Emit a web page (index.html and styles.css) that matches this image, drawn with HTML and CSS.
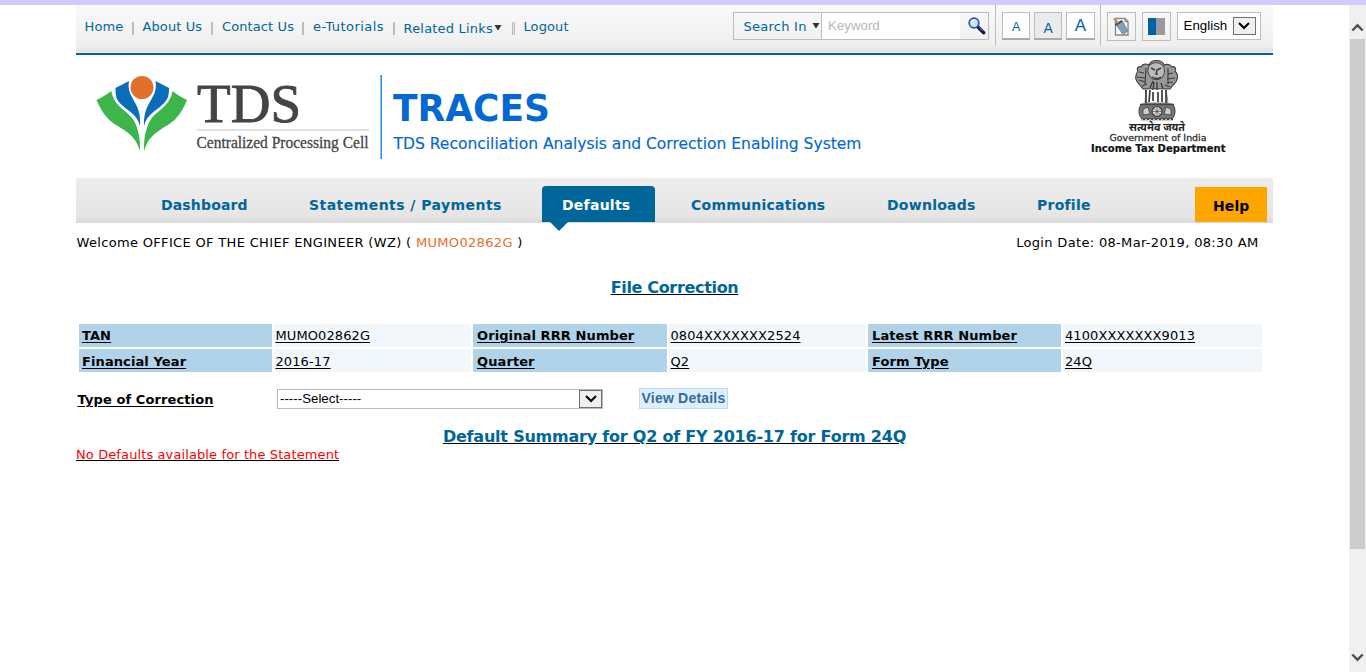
FILE: index.html
```
<!DOCTYPE html>
<html lang="en">
<head>
<meta charset="utf-8">
<title>TRACES - File Correction</title>
<link rel="stylesheet" href="styles.css">
</head>
<body>
<div class="strip"></div>
<div class="shell">
  <div class="page">
    <header class="topbar">
      <nav class="links">
        <a class="l-home">Home</a><i class="sep"></i>
        <a class="l-about">About Us</a><i class="sep"></i>
        <a class="l-contact">Contact Us</a><i class="sep"></i>
        <a class="l-tut">e-Tutorials</a><i class="sep"></i>
        <a class="l-related">Related Links<svg class="caret" width="8" height="6" viewBox="0 0 8 6"><path d="M.5 0h7L4.500 5h-1z" fill="#333"/></svg></a><i class="sep double"></i>
        <a class="l-logout">Logout</a>
      </nav>
      <div class="search">
        <span class="search-in">Search In<svg class="caret" width="8" height="6" viewBox="0 0 8 6"><path d="M.5 0h7L4.500 5h-1z" fill="#333"/></svg></span>
        <span class="keyword">Keyword</span>
        <span class="go"><svg width="18" height="18" viewBox="0 0 18 18"><path d="M9.500 9.500l6.200 6.200" stroke="#101b48" stroke-width="3.400" stroke-linecap="round"/><path d="M11 10.200l4 3.800" stroke="#6384c8" stroke-width="1"/><circle cx="6" cy="6" r="4.800" fill="#cfe4fb" stroke="#2852b8" stroke-width="1.700"/><path d="M3.500 6.200A2.700 2.700 0 0 1 6.400 3.300" fill="none" stroke="#fff" stroke-width="1.600"/></svg></span>
      </div>
      <div class="sizes">
        <span class="sz small">A</span><span class="sz mid">A</span><span class="sz big">A</span>
      </div>
      <div class="tools">
        <span class="tool"><svg width="18" height="20" viewBox="0 0 18 20"><path d="M3.500 1.500h9.500l3 3.200V18H3.500z" fill="#fff" stroke="#888" stroke-width="1.400"/><path d="M13 1.500v3.200h3" fill="none" stroke="#777"/><path d="M4 7.600l6.500-3.600 5.300 10-4.800 3.600z" fill="#7e9fbd" stroke="#6d7d8b" stroke-width=".8"/><path d="M3.300 7.800L10.200 3.900" stroke="#504a45" stroke-width="2"/><path d="M2 1.500L6 6" stroke="#c48c4e" stroke-width="2.200"/></svg></span>
        <span class="tool"><svg width="17" height="17" viewBox="0 0 17 17"><path d="M0 0h8.500v17H0z" fill="#0360a1"/><path d="M8.500 0H17v17H8.500z" fill="#999"/></svg></span>
        <span class="lang">English<span class="drop"><svg width="12" height="8" viewBox="0 0 12 8"><path d="M1 1l5 5 5-5" fill="none" stroke="#000" stroke-width="2"/></svg></span></span>
      </div>
    </header>

    <div class="brand">
      <svg class="tds" width="800" height="112" viewBox="0 0 800 112">
        <g fill="#3cb54a">
          <path d="M20.500 45C25 43 30 40 35.500 36C37 50 50 55 57 64C62 72 64.500 84 64 96C61 86 56 80 48 75C36 67 30 66 20.500 45z"/>
          <path d="M111 45C106.500 43 101.500 40 96.500 36C94.500 50 82 55 75 64C70 72 67.500 84 68 96C71 86 76 80 84 75C96 67 102 66 111 45z"/>
        </g>
        <g fill="#0a6db9">
          <path d="M39.500 33L53 26C50 44 66 46 64 71C61 59 53 57 46 50C40 45 39.500 41 39.500 33z"/>
          <path d="M93 33L79.500 26C82.500 44 67 46 68 71C71 59 79 57 86 50C92 45 93 41 93 33z"/>
        </g>
        <circle cx="66" cy="32.500" r="11.500" fill="#e0702b"/>
        <text class="serif name" x="121" y="67" font-size="54" textLength="104" lengthAdjust="spacingAndGlyphs">TDS</text>
        <path d="M121 75h172" stroke="#c4c4c4" stroke-width="1.200"/>
        <text class="serif cell" x="120.500" y="93" font-size="17.500" textLength="172" lengthAdjust="spacingAndGlyphs">Centralized Processing Cell</text>
        <path d="M305.200 20v84" stroke="#368ae0" stroke-width="1.600"/>
        <text class="blue" x="317" y="66" font-size="37" font-weight="bold" textLength="157" lengthAdjust="spacingAndGlyphs">TRACES</text>
        <text class="blue tag" x="317.500" y="93.500" font-size="15.300" textLength="468" lengthAdjust="spacingAndGlyphs">TDS Reconciliation Analysis and Correction Enabling System</text>
      </svg>
      <svg class="emblem" width="138" height="104" viewBox="1088 55 138 104">
        <g stroke="#3a3a3a" fill="#999">
          <path d="M1138 71c-2-3 1-5 3-4 2-4 6-3 8-2 2-6 13-6 15 0 3-1 6-1 8 2 2-1 5 1 3 4 4 4 3 10-2 14l-3 4h-27l-4-5c-4-4-4-9-1-13z" stroke-width="1.100"/>
          <path d="M1146 89l-1 14h23l-2-14z" fill="#fff" stroke-width=".6"/>
          <path d="M1146 90v13M1150 90l-1 12M1153 92v9M1158 92v10M1162 90v12M1166 90v13" stroke-width="1.700" fill="none"/>
          <path d="M1149 66c-2 4-1 8 1 10 2 5 10 5 13 0 2-3 2-7 0-10-4-5-11-4-14 0z" fill="#bbb"/>
          <path d="M1151 68l4 2m6-2l-4 2-1 4h2m-6 3q5 3 9 0M1153 81l-3 7m4-6l-1 8m4-8v8m4-7l2 6" fill="none" stroke-width="1.400"/>
          <path d="M1139 72l5 1m-7 4 8 1m-6 2 6 2m-3 4 5-2m26-11l-5 1m7 4-8 1m6 3-6 1m3 4-5-2M1146 68l-1 16m23-16v16" fill="none" stroke-width="1.100"/>
          <path d="M1142 104h30c4 3 4 11 0 15h-30c-4-4-4-12 0-15z" fill="#777"/>
          <circle cx="1157" cy="111.500" r="5" fill="#ddd" stroke-width="1.200"/>
          <path d="M1157 106.500v10M1152 111.500h10M1153.500 108l7 7m0-7l-7 7" stroke-width=".6"/>
          <path d="M1143 109l5-2 2 7-7 1zm28 0-5-2-2 7 7 1z" fill="#ccc" stroke-width=".8"/>
          <path d="M1140 104.500h34M1141 119.500h32" stroke="#444" stroke-width="1.500"/>
          <path d="M1141 119.500h31" stroke="#bbb" stroke-width="1" stroke-dasharray="2 2"/>
        </g>
        <text class="deva" x="1129" y="131" font-size="10.500" textLength="56" lengthAdjust="spacingAndGlyphs">सत्यमेव जयते</text>
        <text class="gov" x="1109.500" y="141" font-size="9" textLength="97" lengthAdjust="spacingAndGlyphs">Government of India</text>
        <text class="itd" x="1091" y="152" font-size="9.800" textLength="134.500" lengthAdjust="spacingAndGlyphs">Income Tax Department</text>
      </svg>
    </div>

    <nav class="tabs">
      <a class="t-dash">Dashboard</a>
      <a class="t-stmt">Statements / Payments</a>
      <a class="t-def">Defaults</a>
      <a class="t-comm">Communications</a>
      <a class="t-down">Downloads</a>
      <a class="t-prof">Profile</a>
      <a class="t-help">Help</a>
    </nav>

    <div class="welcome">
      <span class="w-user">Welcome OFFICE OF THE CHIEF ENGINEER (WZ) ( <b>MUMO02862G</b> )</span>
      <span class="w-date">Login Date: 08-Mar-2019, 08:30 AM</span>
    </div>

    <h1 class="title"><span>File Correction</span></h1>

    <div class="grid">
      <div class="k first"><u>TAN</u></div><div class="v"><u>MUMO02862G</u></div>
      <div class="k"><u>Original RRR Number</u></div><div class="v"><u>0804XXXXXXX2524</u></div>
      <div class="k"><u>Latest RRR Number</u></div><div class="v last"><u>4100XXXXXXX9013</u></div>
      <div class="k first low"><u>Financial Year</u></div><div class="v low"><u>2016-17</u></div>
      <div class="k low"><u>Quarter</u></div><div class="v low"><u>Q2</u></div>
      <div class="k low"><u>Form Type</u></div><div class="v last low"><u>24Q</u></div>
    </div>

    <div class="form">
      <span class="f-label"><u>Type of Correction</u></span>
      <span class="select">-----Select-----<span class="drop"><svg width="12" height="8" viewBox="0 0 12 8"><path d="M1 1l5 5 5-5" fill="none" stroke="#000" stroke-width="2"/></svg></span></span>
      <span class="btn">View Details</span>
    </div>

    <h2 class="summary"><span>Default Summary for Q2 of FY 2016-17 for Form 24Q</span></h2>
    <p class="none"><span>No Defaults available for the Statement</span></p>
  </div>

  <div class="scroll">
    <svg width="13" height="9" viewBox="0 0 13 9"><path d="M1.300 7.500l5.200-5.200 5.200 5.200" fill="none" stroke="#505050" stroke-width="2.400"/></svg>
    <div class="thumb"></div>
    <svg width="13" height="9" viewBox="0 0 13 9"><path d="M1.300 1.500l5.200 5.200 5.200-5.200" fill="none" stroke="#505050" stroke-width="2.400"/></svg>
  </div>
</div>
</body>
</html>
```
FILE: styles.css
```
* { box-sizing: border-box; }
body { margin: 0; height: 672px; overflow: hidden; background: #fff; color: #000; font: 13px/16px Verdana, "DejaVu Sans", sans-serif; }
.strip { height: 5px; background: #d5c8ff; }
.shell { display: flex; justify-content: space-between; height: 667px; padding-left: 76px; }
.page { width: 1197px; }

.topbar { display: flex; height: 50px; border-bottom: 2px solid #0464a0; background: linear-gradient(#fafafa, #efefef 85%, #e2e2e2 96%, #f4f4f4); color: #069; }
.links { display: flex; width: 657px; padding: 14px 0 0 8.500px; white-space: nowrap; }
.links a { display: block; flex: none; height: 16px; letter-spacing: .1px; }
.sep { flex: none; width: 2px; height: 13px; margin: 3px 9px 0 0; background: #bdbdbd; }
.sep.double { width: 3px; border: solid #bdbdbd; border-width: 0 1px; background: #e4e4e4; }
.l-home { width: 47px; }
.l-about { width: 68.500px; }
.l-contact { width: 80px; }
.links .l-tut { width: 79.500px; letter-spacing: .45px; }
.links .l-related { width: 108px; padding-top: 2px; letter-spacing: .2px; }
.caret { margin-left: 1px; vertical-align: 2px; }

.search { display: flex; width: 256px; height: 28px; margin-top: 7px; border: 1px solid #bdbdbd; }
.search-in { width: 87px; padding: 6px 0 0 9.500px; white-space: nowrap; letter-spacing: .25px; }
.search-in .caret { margin-left: 5px; vertical-align: 2px; }
.keyword { width: 139px; padding: 5px 0 0 6px; border-left: 1px solid #bdbdbd; background: #fff; color: #b8b8b8; font: 13.300px/16px "Liberation Sans", Arial, sans-serif; }
.go { padding: 4px 0 0 8px; }

.sizes { display: flex; height: 41px; gap: 4px; margin-left: 6px; padding: 7px 5px 0 6px; border: solid #bdbdbd; border-width: 0 1px; font-family: "Liberation Sans", Arial, sans-serif; color: #0464a0; }
.sz { width: 28.200px; height: 28px; border: 1px solid #bdbdbd; border-bottom: 2px solid #aaa; background: #fff; text-align: center; }
.small { padding-top: 6px; font-size: 12.500px; }
.mid { padding-top: 7px; background: #ebebeb; font-size: 14px; }
.big { padding-top: 5px; font-size: 17px; }
.tools { display: flex; gap: 6px; padding: 7px 0 0 6px; }
.tool { display: flex; align-items: center; justify-content: center; width: 29px; height: 29px; border: 1px solid #bdbdbd; }
.lang { display: flex; justify-content: space-between; width: 84px; height: 28px; padding: 4px 4px 0 6px; border: 1px solid #bdbdbd; background: #fff; color: #000; font: 13.300px/18px "Liberation Sans", Arial, sans-serif; }
.drop { display: flex; align-items: center; justify-content: center; width: 23px; height: 18px; border: 1px solid #707070; background: #efefef; }

.brand { display: flex; justify-content: space-between; height: 123px; }
.emblem { margin-right: 47px; }
.serif { font-family: "Liberation Serif", serif; fill: #444; stroke: #444; }
.name { stroke-width: .9; }
.cell { stroke-width: .3; }
.blue { font-family: "DejaVu Sans", sans-serif; fill: #0368d0; }
.tag { stroke: #0368d0; stroke-width: .15; }
.deva { font-family: "Noto Sans Devanagari", "Noto Sans", sans-serif; font-weight: bold; fill: #222; }
.gov { font-family: "DejaVu Sans", sans-serif; fill: #333; stroke: #333; stroke-width: .3; }
.itd { font-family: "DejaVu Sans", sans-serif; font-weight: bold; fill: #111; stroke: #111; stroke-width: .2; }

.tabs { display: flex; height: 45px; padding-left: 85px; background: linear-gradient(#ededed, #e5e5e5 85%, #dadada); color: #069; font: bold 14px/18px "DejaVu Sans", sans-serif; white-space: nowrap; letter-spacing: .25px; }
.tabs a { flex: none; padding-top: 18px; }
.t-dash { width: 148px; letter-spacing: .15px; }
.t-stmt { width: 233px; letter-spacing: .45px; }
.tabs .t-def { position: relative; width: 113px; height: 36px; margin-top: 8px; padding: 10px 0 0 20px; border-radius: 4px 4px 0 0; background: #069; color: #fff; }
.t-def::after { content: ""; position: absolute; left: 8px; top: 36px; border: solid transparent; border-width: 9px 9px 0; border-top-color: #069; }
.t-comm { width: 232px; padding-left: 36px; }
.t-down { width: 150px; }
.t-prof { width: 158px; }
.tabs .t-help { width: 72px; height: 35px; margin-top: 9px; padding: 10px 0 0 18px; background: #ffa500; color: #000; letter-spacing: .1px; }

.welcome { display: flex; justify-content: space-between; padding: 12px 14.500px 0 .5px; letter-spacing: .33px; }
.welcome b { color: #e0702b; font-weight: normal; }

.title, .summary { margin: 0; font: bold 16px/20px "DejaVu Sans", sans-serif; color: #069; text-align: center; text-decoration: underline; text-decoration-color: #000; }
.title { margin-top: 27px; letter-spacing: -.33px; }
.grid { display: grid; grid-template-columns: 193px 197px 194px 197px 193px 199px; grid-auto-rows: 23px; gap: 2px; margin: 26px 0 0 3px; line-height: 23px; letter-spacing: .1px; }
.k { padding-left: 4px; background: #b0d3ea; font-weight: bold; }
.k.first { padding-left: 3px; }
.v { padding-left: 1.500px; background: #f2f7fc; }
.v.last { padding-left: 2px; }
.low { line-height: 25px; }
u { text-underline-offset: 2px; }

.form { display: flex; margin-top: 16px; height: 22px; padding-left: 1.500px; }
.f-label { width: 199.500px; padding-top: 4px; font-weight: bold; letter-spacing: .1px; }
.select { display: flex; justify-content: space-between; width: 326px; height: 20px; margin-top: 1px; padding-left: 2px; border: 1px solid #b8b8b8; font: 13.300px/17px "Liberation Sans", Arial, sans-serif; }
.btn { width: 89px; height: 21px; margin-left: 36px; border: 1px solid #bfd9ee; background: #dfeefb; color: #2e6da0; font: bold 14px/19px "Liberation Sans", Arial, sans-serif; letter-spacing: .2px; text-align: center; white-space: nowrap; }
.summary { margin-top: 17px; letter-spacing: -.22px; }
.none { margin: 0; color: #f00; letter-spacing: .11px; text-decoration: underline; text-decoration-color: #000; }

.scroll { display: flex; flex-direction: column; align-items: center; width: 17px; padding: 18px 0 10px; background: #f0f0f0; }
.thumb { width: 15px; height: 510px; margin: 7px 0 auto; background: #cdcdcd; }
```
